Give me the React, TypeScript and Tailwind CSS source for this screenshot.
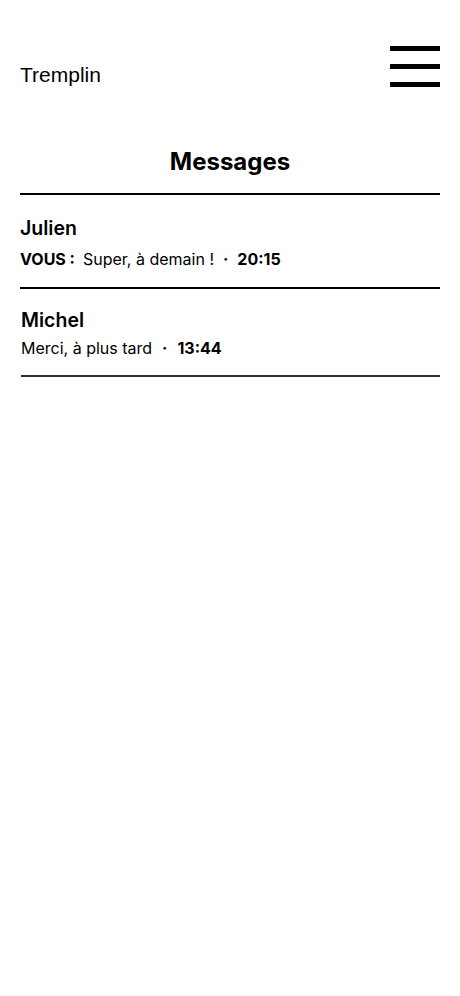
import React from "react";

const inter = { fontFamily: "Inter, 'Noto Sans', sans-serif" };

export default function App() {
  return (
    <div className="min-h-[996px] w-full bg-white text-black" style={inter}>
      <header className="flex items-end justify-between px-5 pt-[46px]">
        <span className="mb-[-2px] text-[21px] leading-[28px] font-['Liberation_Sans',Arial,sans-serif]">
          Tremplin
        </span>
        <button className="flex w-[50px] flex-col gap-[13px]" aria-label="menu">
          <span className="block h-[5px] w-full bg-black" />
          <span className="block h-[5px] w-full bg-black" />
          <span className="block h-[5px] w-full bg-black" />
        </button>
      </header>
      <main className="px-5">
        <h1 className="mt-[59px] text-center text-[24px] font-bold leading-[32px]">Messages</h1>
        <div className="mt-[15px] h-[2px] bg-black" />
        <div className="pt-[20px] pb-[17px]">
          <div className="text-[19.5px] font-semibold leading-[26px]">Julien</div>
          <div className="mt-[7px] flex items-center text-[16px] leading-[22px]">
            <span className="font-bold">VOUS :</span>
            <span className="ml-[8px]">Super, à demain !</span>
            <span className="mx-[9px] font-bold">·</span>
            <span className="font-bold">20:15</span>
          </div>
        </div>
        <div className="h-[2px] bg-black" />
        <div className="pl-px pt-[18px] pb-[16px]">
          <div className="text-[19.5px] font-semibold leading-[26px]">Michel</div>
          <div className="mt-[4px] flex items-center text-[16px] leading-[22px]">
            <span>Merci, à plus tard</span>
            <span className="mx-[10px] font-bold">·</span>
            <span className="font-bold">13:44</span>
          </div>
        </div>
        <div className="ml-px h-[2px] bg-[#333]" />
      </main>
    </div>
  );
}
